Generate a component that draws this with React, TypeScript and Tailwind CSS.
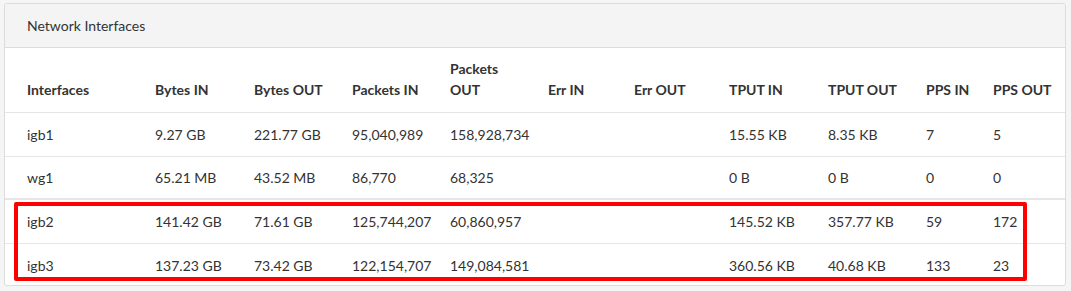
import React from "react";

const rows = [
  ["igb1", "9.27 GB", "221.77 GB", "95,040,989", "158,928,734", "", "", "15.55 KB", "8.35 KB", "7", "5"],
  ["wg1", "65.21 MB", "43.52 MB", "86,770", "68,325", "", "", "0 B", "0 B", "0", "0"],
  ["igb2", "141.42 GB", "71.61 GB", "125,744,207", "60,860,957", "", "", "145.52 KB", "357.77 KB", "59", "172"],
  ["igb3", "137.23 GB", "73.42 GB", "122,154,707", "149,084,581", "", "", "360.56 KB", "40.68 KB", "133", "23"],
];

const widths = ["w-[138px]", "w-[99px]", "w-[98px]", "w-[98px]", "w-[98px]", "w-[86px]", "w-[95px]", "w-[99px]", "w-[98px]", "w-[67px]", "w-[84px]"];

export default function App() {
  return (
    <div className="relative w-[1071px] h-[291px] bg-[#f5f5f5] pt-[3px] pl-[4px]" style={{ fontFamily: "Lato, 'Noto Sans', sans-serif" }}>
      <div className="w-[1062px] h-[283px] bg-white border border-[#dcdcdc] rounded-[3px] overflow-hidden text-[14px] text-[#333]">
        <div className="h-[44px] bg-[#f4f4f4] border-b border-[#dcdcdc] flex items-center pl-[22px] text-[14px] text-[#333]">
          Network Interfaces
        </div>
        <table className="table-fixed border-collapse w-[1060px]">
          <colgroup>
            {widths.map((w, i) => (
              <col key={i} className={w} />
            ))}
          </colgroup>
          <thead>
            <tr className="border-b border-[#e6e6e6]">
              {["Interfaces", "Bytes IN", "Bytes OUT", "Packets IN", "Packets\nOUT", "Err IN", "Err OUT", "TPUT IN", "TPUT OUT", "PPS IN", "PPS OUT"].map((h, i) => (
                <th
                  key={i}
                  className={`h-[64px] text-left align-bottom font-bold leading-[21px] pt-0 pb-[12px] whitespace-pre ${i === 0 ? "pl-[22px]" : "pl-[12px]"} pr-0`}
                >
                  {h}
                </th>
              ))}
            </tr>
          </thead>
          <tbody>
            {rows.map((r, ri) => (
              <tr key={ri} className={ri === 1 ? "border-b-2 border-[#e6e6e6]" : ri === 3 ? "" : "border-b border-[#e6e6e6]"}>
                {r.map((c, ci) => (
                  <td
                    key={ci}
                    className={`${ri === 1 ? "h-[43px]" : "h-[44px]"} p-0 align-middle leading-[21px] whitespace-nowrap ${ci === 0 ? "pl-[22px]" : "pl-[12px]"}`}
                  >
                    {c}
                  </td>
                ))}
              </tr>
            ))}
          </tbody>
        </table>
      </div>
      <div className="absolute left-[14px] top-[202px] w-[1013px] h-[79px] border-4 border-[#ff0000] rounded-[2px] pointer-events-none" />
    </div>
  );
}
